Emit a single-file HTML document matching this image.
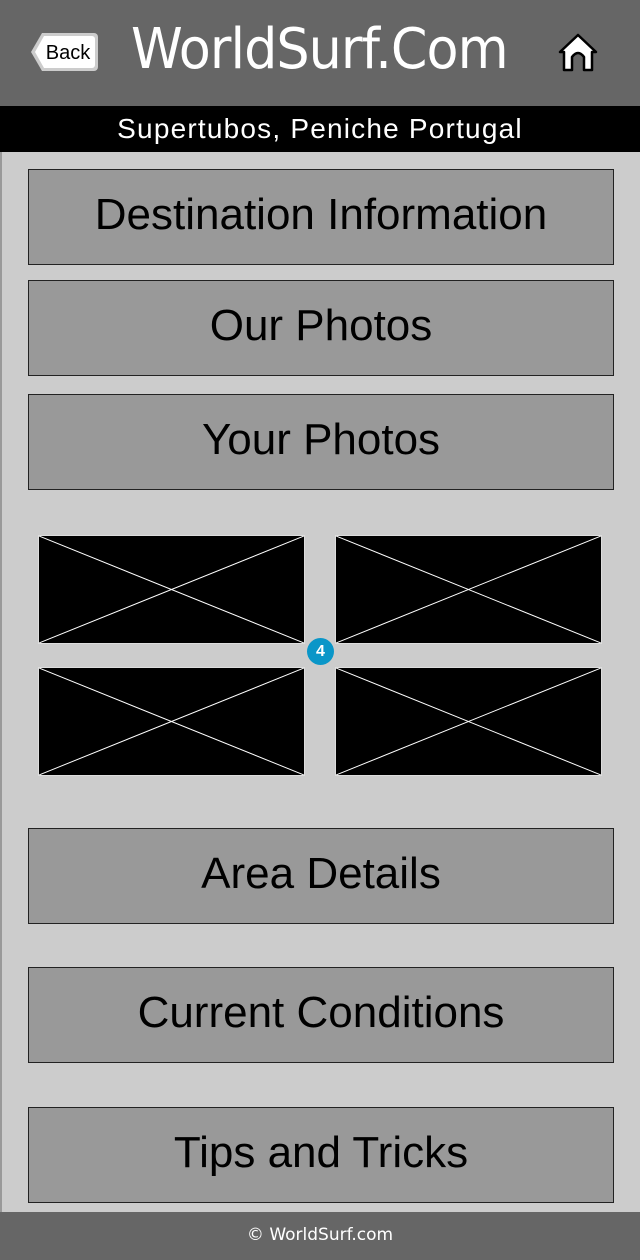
<!DOCTYPE html>
<html><head><style>
body{margin:0;width:640px;height:1260px;background:#ccc;font-family:"Liberation Sans",sans-serif;position:relative;overflow:hidden}
.hdr{position:absolute;left:0;top:0;width:640px;height:106px;background:#666}
.title{position:absolute;left:131px;top:17px;color:#fff;font-size:56px;font-family:"DejaVu Sans","Liberation Sans",sans-serif;font-weight:normal;letter-spacing:-1px;transform:scaleX(0.935);transform-origin:left;white-space:nowrap}
.sub{position:absolute;left:0;top:106px;width:640px;height:46px;background:#000;color:#fff;font-size:28px;text-align:center;line-height:46px;letter-spacing:1.2px}
.btn{position:absolute;left:28px;width:584px;height:94px;background:#999;border:1px solid #222;text-align:center;line-height:90px;font-size:44px;color:#000}
.ph{position:absolute;width:267px;height:109px;background:#000;border:1px solid #ddd;box-sizing:border-box}
.ftr{position:absolute;left:0;top:1212px;width:640px;height:48px;background:#666;color:#fff;text-align:center;line-height:46px;font-size:17px;font-family:"DejaVu Sans",sans-serif}
.edge{position:absolute;left:0;top:152px;width:2px;height:1060px;background:#999}
</style></head><body>
<div class="hdr"></div>
<svg style="position:absolute;left:28px;top:30px" width="72" height="44" viewBox="0 0 72 44">
<path d="M14 3 H66 a4 4 0 0 1 4 4 V37 a4 4 0 0 1 -4 4 H14 L3 22 Z" fill="#ccc"/>
<path d="M16 6 H64 a3 3 0 0 1 3 3 V35 a3 3 0 0 1 -3 3 H16 L7 22 Z" fill="#fff"/>
<text x="40" y="29" font-family="Liberation Sans" font-size="20" text-anchor="middle" fill="#000">Back</text>
</svg>
<div class="title">WorldSurf.Com</div>
<svg style="position:absolute;left:558px;top:33px" width="40" height="40" viewBox="0 0 40 40">
<path d="M20 2 L38 19 L34 19 L34 37 L26 37 L26 24 Q20 16 14 24 L14 37 L6 37 L6 19 L2 19 Z" fill="#fff" stroke="#000" stroke-width="2.5" stroke-linejoin="round"/>
</svg>
<div class="sub">Supertubos, Peniche Portugal</div>
<div class="edge"></div>
<div class="btn" style="top:169px">Destination Information</div>
<div class="btn" style="top:280px">Our Photos</div>
<div class="btn" style="top:394px">Your Photos</div>
<svg class="ph" style="left:38px;top:535px" viewBox="0 0 266 108" preserveAspectRatio="none"><path d="M0 0L266 108M266 0L0 108" stroke="#fff" stroke-width="1"/></svg>
<svg class="ph" style="left:335px;top:535px" viewBox="0 0 266 108" preserveAspectRatio="none"><path d="M0 0L266 108M266 0L0 108" stroke="#fff" stroke-width="1"/></svg>
<svg class="ph" style="left:38px;top:667px" viewBox="0 0 266 108" preserveAspectRatio="none"><path d="M0 0L266 108M266 0L0 108" stroke="#fff" stroke-width="1"/></svg>
<svg class="ph" style="left:335px;top:667px" viewBox="0 0 266 108" preserveAspectRatio="none"><path d="M0 0L266 108M266 0L0 108" stroke="#fff" stroke-width="1"/></svg>
<div style="position:absolute;left:307px;top:638px;width:27px;height:27px;border-radius:50%;background:#0a96c8;color:#fff;font-weight:bold;font-size:16px;text-align:center;line-height:27px">4</div>
<div class="btn" style="top:828px">Area Details</div>
<div class="btn" style="top:967px">Current Conditions</div>
<div class="btn" style="top:1107px">Tips and Tricks</div>
<div class="ftr">© WorldSurf.com</div>
</body></html>
